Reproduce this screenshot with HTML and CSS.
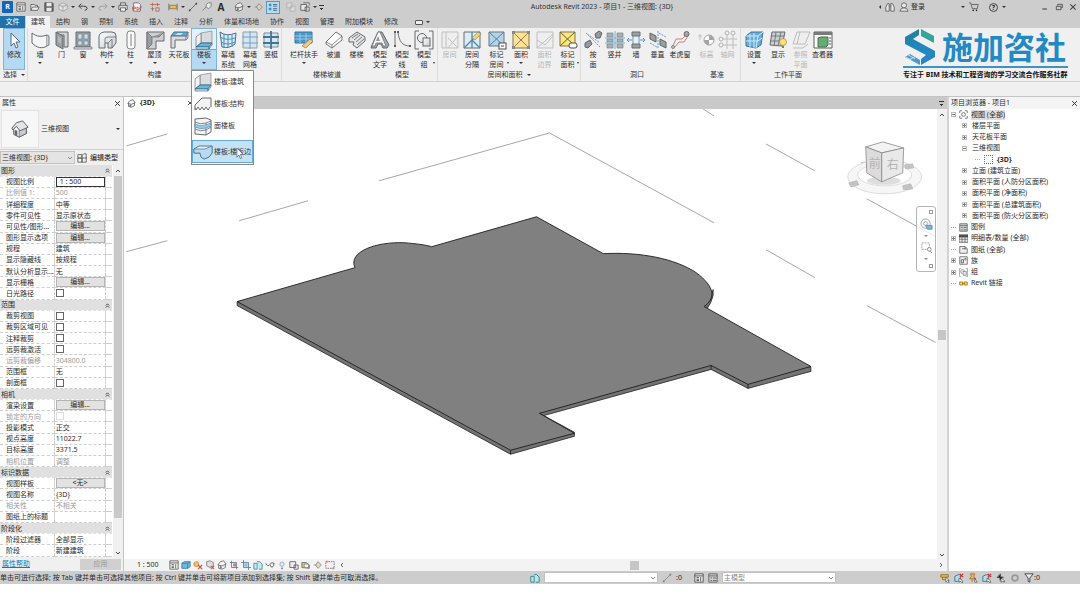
FILE: index.html
```html
<!DOCTYPE html>
<html lang="zh-CN">
<head>
<meta charset="utf-8">
<title>Autodesk Revit 2023 - 项目1</title>
<link rel="stylesheet" href="styles.css">
</head>
<body>
<svg class="defs" aria-hidden="true">
  <defs>
    <linearGradient id="brandFill" x1="0" y1="0" x2="0" y2="1"><stop offset="0" stop-color="#237f96"/><stop offset=".5" stop-color="#1f88bd"/><stop offset="1" stop-color="#2e83c6"/></linearGradient>
    <linearGradient id="steel" x1="0" y1="0" x2="1" y2="1"><stop offset="0" stop-color="#fff"/><stop offset="1" stop-color="#c4c8cc"/></linearGradient>
  </defs>
  <!-- ribbon icons -->
  <symbol id="i-cursor" viewBox="0 0 20 20"><path d="M7 3v13l3-3 2 5 2-1-2-5h4z" fill="#fff" stroke="#4d5b66"/></symbol>
  <symbol id="i-wall" viewBox="0 0 20 20"><path d="M2 3c5 4 9 4 15 2v11c-5 3-10 2-15-3z" fill="#f6f7f7" stroke="#4e5256"/><path d="M17 5l2 1v9l-2 1" fill="#c4c8cc" stroke="#4e5256" stroke-width=".8"/></symbol>
  <symbol id="i-door" viewBox="0 0 20 20"><path d="M5 2h11v15h-4V5H5z" fill="#cfd2d5" stroke="#4e5256"/><path d="M4 2l7 4v13l-7-4z" fill="#8b9094" stroke="#4e5256"/><path d="M6 6l3 2v6l-3-2z" fill="#a9adb1"/></symbol>
  <symbol id="i-window" viewBox="0 0 20 20"><path d="M3 2h14v15H3z" fill="#8e979e" stroke="#4e5256"/><path d="M5 4h4v5H5zM11 4h4v5h-4zM5 11h4v4H5zM11 11h4v4h-4z" fill="#c3dcef" stroke="#5d6870" stroke-width=".6"/><path d="M1 17h18v2H1z" fill="#dfe1e3" stroke="#4e5256" stroke-width=".7"/></symbol>
  <symbol id="i-comp" viewBox="0 0 20 20"><path d="M2 18V7q0-4 5-5h8q4 0 4 4v7l-4 5h-4v-5H8v5z" fill="url(#steel)" stroke="#4e5256"/><path d="M8 13V9q0-2 3-2h8M11 13l4-4v9" fill="none" stroke="#4e5256" stroke-width=".8"/></symbol>
  <symbol id="i-column" viewBox="0 0 20 20"><rect x="6" y="1" width="8" height="18" rx="3" fill="#fafafa" stroke="#6d7175"/><path d="M10 4v12" stroke="#6d7175"/></symbol>
  <symbol id="i-roof" viewBox="0 0 20 20"><path d="M2 2h17v9h-8v8H2z" fill="#c9cccf" stroke="#4e5256"/><path d="M2 2l5 5v7l-5 5zM7 7h7l5-5" fill="#8a8f93" stroke="#4e5256" stroke-width=".7"/></symbol>
  <symbol id="i-ceiling" viewBox="0 0 20 20"><path d="M2 6l3-4h14l-2 5z" fill="#3aa0dc" stroke="#33607f"/><path d="M2 6h15v4H6v8H2z" fill="#d7dadd" stroke="#555"/><path d="M6 5l3-2 5 0-2 2z" fill="#bfe2f5"/><path d="M17 7l2-5v6l-2 2" fill="#b0b5b9" stroke="#555" stroke-width=".7"/></symbol>
  <symbol id="i-floor" viewBox="0 0 20 20"><path d="M7 3l11-2v12H7z" fill="#d5d8da" stroke="#7d8286" stroke-width=".8"/><path d="M7 3L2 7v10l5-4z" fill="#f2f2f2" stroke="#6b7074" stroke-width=".8"/><path d="M2 17l5-4h11l-3 4z" fill="#46b0e3" stroke="#26556f"/><path d="M2 17h13v2H2zM15 17l3-4v2l-3 4z" fill="#d4eaf6" stroke="#26556f" stroke-width=".7"/></symbol>
  <symbol id="i-floorst" viewBox="0 0 20 20"><path d="M2 16v-5l7-7h9v9M2 14l1 2 2-3 2 3 2-3 2 3 2-3 2 3 2-3" fill="#f1f1f1" stroke="#505458"/></symbol>
  <symbol id="i-floorface" viewBox="0 0 20 20"><path d="M2 3l11-1 5 2v12l-5 3-11-1z" fill="#f1f2f3" stroke="#4e5256"/><path d="M2 6q5 3 11 1l5-2M2 13q5 3 11 1l5-3M13 7v12" fill="none" stroke="#4e5256" stroke-width=".8"/><path d="M2 8q5 3 11 1l5-2v3l-5 2q-6 2-11-1z" fill="#7cc5eb" stroke="#2c6a91" stroke-width=".6"/></symbol>
  <symbol id="i-flooredge" viewBox="0 0 20 20"><path d="M1 7l5-3h13v7l-3 4-5 2-3-2-1-4H1z" fill="#f2f7fb" stroke="#3e6684"/><path d="M1 7h11l7-3v7l-3 4-5 2-3-2-1-4H1z" fill="#b5d9ee" stroke="#3e6684" stroke-width=".8"/></symbol>
  <symbol id="i-curtain" viewBox="0 0 20 20"><path d="M2 2q6 5 16 1l-1 11q-6 5-13 3z" fill="#d6ecf8" stroke="#2f5a78"/><path d="M6 4v13M10 5v13M14 5v12M2 7q6 4 15 1M3 12q7 4 14 0" fill="none" stroke="#2d7cb0"/></symbol>
  <symbol id="i-grid" viewBox="0 0 20 20"><path d="M3 2h14v16H3z" fill="#d3e4ee" stroke="#858d93"/><path d="M10 1v18M2 7h16M2 13h16" stroke="#4e97c7"/></symbol>
  <symbol id="i-mullion" viewBox="0 0 20 20"><path d="M3 3h14v14H3z" fill="#cfe5f2" stroke="#6b7880"/><path d="M10 1v18M2 7h16M2 13h16" stroke="#245f8b" stroke-width="1.800"/></symbol>
  <symbol id="i-rail" viewBox="0 0 20 20"><path d="M1 2h17v11H1z" fill="#2f88c4" stroke="#1f5f8f"/><path d="M1 6h17M1 9h17M6 3v10M12 3v10" stroke="#9fd2f0" stroke-width=".8"/><path d="M8 16l8-7 3 2-7 7z" fill="#f0c277" stroke="#8f6424" stroke-width=".7"/></symbol>
  <symbol id="i-ramp" viewBox="0 0 20 20"><path d="M2 12L12 2l6 4v4L8 18l-6-4z" fill="#fdfdfd" stroke="#5d6165"/><path d="M2 12l6 3L18 6M8 15v3" fill="none" stroke="#5d6165" stroke-width=".8"/></symbol>
  <symbol id="i-stair" viewBox="0 0 20 20"><path d="M2 8l8-6 8 5v4l-8 7-4-3 1-3-5 0z" fill="#e3e5e7" stroke="#4e5256"/><path d="M5 8l6-4M7 10l6-5M9 12l6-5M10 15l7-6" stroke="#5f6468"/></symbol>
  <symbol id="i-text3d" viewBox="0 0 20 20"><path d="M8 2h4l7 13-2 3h-4l-2-4H8l-2 4H1l1-3z" fill="#9a9fa3" stroke="#4b4f53"/><path d="M8 2h2l6 14h-3l-1-3H6l-1 3H2z" fill="#f8f8f8" stroke="#4b4f53" stroke-width=".7"/><path d="M8 6l2 5H6z" fill="#888"/></symbol>
  <symbol id="i-mline" viewBox="0 0 20 20"><path d="M3 2v13M6 2c1 9 4 14 12 14" fill="none" stroke="#5a5e62"/><path d="M2 1h2v2H2zM2 15h2v2H2zM5 1h2v2H5zM17 15h2v2h-2z" fill="#444"/></symbol>
  <symbol id="i-group" viewBox="0 0 20 20"><path d="M5 1H1v18h4M15 1h4v18h-4" fill="none" stroke="#4e5256"/><circle cx="8" cy="8" r="4.500" fill="#eee" stroke="#4e5256"/><rect x="9" y="8" width="7" height="8" fill="url(#steel)" stroke="#4e5256"/></symbol>
  <symbol id="i-room" viewBox="0 0 20 20"><path d="M2 2h16v16H2zM6 2v16M8 8l10 10M18 6L8 18" fill="#eee" stroke="#b9b9b9"/></symbol>
  <symbol id="i-roomsep" viewBox="0 0 20 20"><path d="M2 2h16v16H2z" fill="#d8ecf8" stroke="#52565a"/><path d="M10 2v16M2 18L18 2M10 10l8 8" stroke="#3474a1" stroke-width="1.300"/><path d="M10 8l6-6 3 2-6 6z" fill="#f2cf5b" stroke="#806a2a" stroke-width=".6"/></symbol>
  <symbol id="i-tagroom" viewBox="0 0 20 20"><path d="M2 2h15v14H2z" fill="#a9cfe8" stroke="#52616c"/><path d="M2 2l15 14M17 2L2 16" stroke="#346f98"/><rect x="12" y="13" width="7" height="6" fill="#fff" stroke="#333"/><path d="M14 16h3" stroke="#333"/></symbol>
  <symbol id="i-area" viewBox="0 0 20 20"><path d="M2 2h16v16H2z" fill="#ffe08a" stroke="#72602b"/><path d="M2 2l16 16M18 2L2 18" stroke="#8a6a20"/><path d="M1 1h3v3H1zM16 1h3v3h-3zM1 16h3v3H1zM16 16h3v3h-3z" fill="#777"/></symbol>
  <symbol id="i-areab" viewBox="0 0 20 20"><path d="M2 2h16v16H2zM2 10l8 5 8-9M2 18l16-14" fill="#eee" stroke="#b9b9b9"/></symbol>
  <symbol id="i-tagarea" viewBox="0 0 20 20"><path d="M2 2h15v14H2z" fill="#ffe36b" stroke="#72602b"/><path d="M2 2l15 14M17 2L2 16" stroke="#4e4720"/><rect x="11" y="13" width="8" height="5" rx="2" fill="#fff" stroke="#333"/></symbol>
  <symbol id="i-byface" viewBox="0 0 20 20"><path d="M2 13l5-3 2 4-4 4-3-1zM12 4l4-3 3 2-2 5-4 0z" fill="#858b90" stroke="#474c50"/><path d="M3 3l14 14M16 12l-12-8" stroke="#4a94c4" stroke-dasharray="2 1"/></symbol>
  <symbol id="i-shaft" viewBox="0 0 20 20"><path d="M2 3h6v4H2zM12 3h6v4h-6zM2 9h6v3H2zM12 9h6v3h-6zM2 14h6v4H2zM12 14h6v4h-6z" fill="#a0a5aa" stroke="#6a7075" stroke-width=".7"/><path d="M10 1v18M0 8h20M0 13h20" stroke="#58a4d0"/></symbol>
  <symbol id="i-wallop" viewBox="0 0 20 20"><path d="M6 2h8v4H6zM6 14h8v4H6z" fill="#8b9197" stroke="#50565b"/><path d="M7 6v8M13 6v8M1 10h5M14 10h5M3 8l-2 2 2 2M17 8l2 2-2 2" fill="none" stroke="#3b8fc2"/></symbol>
  <symbol id="i-vert" viewBox="0 0 20 20"><path d="M2 3l6 3v6l-6-3zM12 9l6 3v6l-6-3z" fill="#8b9197" stroke="#474c50"/><path d="M10 1v18M2 13l7 4M11 3l7 4" stroke="#4a94c4" stroke-dasharray="2 1"/></symbol>
  <symbol id="i-dormer" viewBox="0 0 20 20"><path d="M2 18l4-9 6 0 6-6M4 18l5-6 5 0 4-6" fill="none" stroke="#c8716e"/><circle cx="16.500" cy="4" r="2.500" fill="#999" stroke="#555"/><circle cx="3" cy="17" r="1.500" fill="#bbb" stroke="#777"/></symbol>
  <symbol id="i-level" viewBox="0 0 20 20"><path d="M1 6h4M3 4v6" stroke="#bbb"/><circle cx="12" cy="10" r="5" fill="#fff" stroke="#999"/><path d="M12 10V5a5 5 0 0 1 5 5zM12 10v5a5 5 0 0 1-5-5z" fill="#999"/></symbol>
  <symbol id="i-axis" viewBox="0 0 20 20"><path d="M9 5v14M15 5v14M5 9h14M5 15h14" stroke="#b5b5b5"/><g fill="#f3f3f3" stroke="#aaa"><circle cx="9" cy="3" r="2"/><circle cx="15" cy="3" r="2"/><circle cx="3" cy="9" r="2"/><circle cx="3" cy="15" r="2"/></g></symbol>
  <symbol id="i-wpset" viewBox="0 0 20 20"><path d="M2 6l5-4h12l-2 13-5 3-10-2z" fill="#4da3d8" stroke="#235f8b"/><path d="M2 6h12l5-4M14 6l-2 12M6 4v13M10 3v15M2 11h12l4-3" fill="none" stroke="#cdeaf9"/></symbol>
  <symbol id="i-wpshow" viewBox="0 0 20 20"><path d="M4 2h13l-3 14-12-1z" fill="#c4cacf" stroke="#4e5256"/><path d="M8 2L6 16M13 2l-3 14M3 6h13M3 11h12" stroke="#4e5256" stroke-width=".8"/><circle cx="15" cy="12" r="3.500" fill="#ffdf63" stroke="#9c7a18" stroke-width=".7"/><path d="M14 16h2v2h-2z" fill="#666"/></symbol>
  <symbol id="i-refp" viewBox="0 0 20 20"><path d="M6 2h13l-5 12H2zM2 18h10l5-4M9 2l-3 12" fill="#eee" stroke="#b5b5b5"/></symbol>
  <symbol id="i-viewer" viewBox="0 0 20 20"><path d="M1 2h18v16H1z" fill="#fff" stroke="#444"/><path d="M1 2h18v3H1z" fill="#666"/><path d="M5 8l3-1h7v8l-2 2H5z" fill="#4fa05a" stroke="#2b6134"/><path d="M17 7v9" stroke="#444" stroke-dasharray="2 1"/></symbol>
  <!-- small icons -->
  <symbol id="s-win" viewBox="0 0 12 12"><path d="M1 1h10v10H1zM1 3.500h10" fill="#eee" stroke="#444"/><path d="M3 5.500h3M3 7.500h3M3 9h3M8 5v5" stroke="#444"/></symbol>
  <symbol id="s-open" viewBox="0 0 12 12"><path d="M1 10V3h4l1 1h3v2M1 10l2-4h8l-2 4z" fill="#f5f5f5" stroke="#444"/></symbol>
  <symbol id="s-save" viewBox="0 0 12 12"><path d="M1 1h9l1 1v9H1z" fill="#555a5e" stroke="#333"/><path d="M3 1h6v4H3zM3 7h6v4H3z" fill="#eee"/></symbol>
  <symbol id="s-cube" viewBox="0 0 12 12"><path d="M6 1l5 2.500v5L6 11 1 8.500v-5zM1 3.500L6 6l5-2.500M6 6v5" fill="#e8e8e8" stroke="currentColor"/></symbol>
  <symbol id="s-undo" viewBox="0 0 12 12"><path d="M4 2L1 5l3 3M1 5h6q4 0 4 3-1 2-3 2" fill="none" stroke="currentColor" stroke-width="1.200"/></symbol>
  <symbol id="s-redo" viewBox="0 0 12 12"><path d="M8 2l3 3-3 3M11 5H5Q1 5 1 8q1 2 3 2" fill="none" stroke="currentColor" stroke-width="1.200"/></symbol>
  <symbol id="s-print" viewBox="0 0 12 12"><path d="M3 4V1h6v3M1 4h10v5H1z" fill="#ddd" stroke="#444"/><path d="M3 7h6v4H3z" fill="#fff" stroke="#444"/></symbol>
  <symbol id="s-pdf" viewBox="0 0 12 12"><path d="M2 1h6l2 2v8H2z" fill="#fff" stroke="#555"/><path d="M1 10V6h3v2H1M6 10V6l3 2-3 2M10 10V6h2" fill="none" stroke="#c8392f"/></symbol>
  <symbol id="s-measure" viewBox="0 0 12 12"><path d="M0 3h12M3 1v4M9 1v4" stroke="#b84e43"/><path d="M3 6v5M1 8h4M7 7h4v4H7z" fill="none" stroke="#a35a50"/></symbol>
  <symbol id="s-ruler" viewBox="0 0 12 12"><path d="M1 2v8M11 2v8" stroke="#555"/><path d="M2 4h8v4H2z" fill="#e5bf52" stroke="#8a6a20"/></symbol>
  <symbol id="s-line" viewBox="0 0 12 12"><path d="M2 10l8-8" stroke="#444"/><path d="M1 9h2v2H1zM9 1h2v2H9z" fill="#333"/></symbol>
  <symbol id="s-tag" viewBox="0 0 12 12"><path d="M1 10l4-4" stroke="#666"/><path d="M5 6V3l3-2h3v4L8 8z" fill="#eee" stroke="#666"/></symbol>
  <symbol id="s-house" viewBox="0 0 12 12"><path d="M2 6v4l4 1 4-2V5M1 6l3-4 4-1 3 4-5 2z" fill="#f6f6f6" stroke="#4e5256"/><path d="M4 10V8h1v2" stroke="#333" fill="none"/></symbol>
  <symbol id="i-house" viewBox="0 0 20 20"><path d="M3 9v7l6 3 8-4V8l-7-4z" fill="#fafafa" stroke="#54595d"/><path d="M9 19v-8l8-3v7z" fill="#c9ccce" stroke="#54595d" stroke-width=".8"/><path d="M1 9l5-6 7-2 6 7-9 4-4-5-4 4z" fill="#e2e4e6" stroke="#54595d"/><path d="M4 16v-5l3 1v6z" fill="#5f6468"/></symbol>
  <symbol id="s-section" viewBox="0 0 12 12"><path d="M1 6h3M6 2l4 4-4 4-3-4z" fill="#e7d0b4" stroke="#777"/></symbol>
  <symbol id="s-list" viewBox="0 0 12 12"><path d="M1 2h3v3H1zM1 7h3v3H1z" fill="#2d7fb9"/><path d="M6 3h5M6 5h5M6 8h5M6 10h5" stroke="#2b4c64"/></symbol>
  <symbol id="s-closewin" viewBox="0 0 12 12"><path d="M1 1h6v6H1zM5 5h6v6H5z" fill="#ddd" stroke="#aaa"/></symbol>
  <symbol id="s-switch" viewBox="0 0 12 12"><path d="M1 3h7v7H1zM4 1h7v3M6 6h5v5H6z" fill="#eee" stroke="#444"/></symbol>
  <symbol id="s-bino" viewBox="0 0 12 12"><path d="M1 11V6l2-4h2v9zM11 11V6L9 2H7v9zM5 5h2" fill="#eee" stroke="#444"/></symbol>
  <symbol id="s-user" viewBox="0 0 12 12"><circle cx="6" cy="4" r="3" fill="#eee" stroke="#444"/><path d="M1 11q1-4 5-4t5 4z" fill="#eee" stroke="#444"/></symbol>
  <symbol id="s-cart" viewBox="0 0 12 12"><path d="M0 1h2l2 7h6l1-5H3" fill="none" stroke="#444"/><circle cx="5" cy="10" r="1"/><circle cx="9" cy="10" r="1"/></symbol>
  <symbol id="s-restore" viewBox="0 0 12 12"><path d="M4 4V2h7v5H9M2 5h7v5H2z" fill="none" stroke="#333" stroke-width="1.300"/></symbol>
  <symbol id="s-close" viewBox="0 0 12 12"><path d="M2 2l8 8M10 2l-8 8" stroke="#333" stroke-width="1.700"/></symbol>
  <symbol id="s-min" viewBox="0 0 12 12"><path d="M2 9h7" stroke="#333" stroke-width="1.700"/></symbol>
  <symbol id="s-up" viewBox="0 0 12 12"><path d="M2 8l4-4 4 4" fill="none" stroke="#444" stroke-width="2"/></symbol>
  <symbol id="s-down" viewBox="0 0 12 12"><path d="M2 4l4 4 4-4" fill="none" stroke="currentColor" stroke-width="2"/></symbol>
  <symbol id="s-right" viewBox="0 0 12 12"><path d="M4 2l4 4-4 4" fill="none" stroke="#444" stroke-width="2"/></symbol>
  <symbol id="s-left" viewBox="0 0 12 12"><path d="M8 2L4 6l4 4" fill="none" stroke="#444" stroke-width="2"/></symbol>
  <symbol id="s-collapse" viewBox="0 0 12 12"><path d="M2 6l4-4 4 4M2 11l4-4 4 4" fill="none" stroke="#333" stroke-width="2"/></symbol>
  <symbol id="s-edit" viewBox="0 0 12 12"><path d="M1 2h5v4H1zM1 6h5v5H1zM6 3l2-2h3v10H6z" fill="#f4f4f4" stroke="#555"/><path d="M7 6h5" stroke="#555"/></symbol>
  <symbol id="s-box" viewBox="0 0 12 12"><path d="M1 4l3-2h7v6l-3 2H1zM1 4h7v6M8 4l3-2" fill="#58b0e4" stroke="#23658f"/></symbol>
  <symbol id="s-sunx" viewBox="0 0 12 12"><circle cx="4" cy="5" r="3" fill="#f0bb50" stroke="#96671d" stroke-width=".7"/><path d="M6 6l5 5M11 6l-5 5" stroke="#c33" stroke-width="1.500"/></symbol>
  <symbol id="s-shade" viewBox="0 0 12 12"><path d="M2 2l4-1 4 2v4L6 9 2 7z" fill="#ddd" stroke="#666"/><path d="M7 7l4 4M11 7l-4 4" stroke="#c33" stroke-width="1.300"/></symbol>
  <symbol id="s-crop" viewBox="0 0 12 12"><path d="M3 0v9h9M0 3h9v9" fill="none" stroke="#41687f"/><path d="M4 4h4v4H4z" fill="#73b5dd"/></symbol>
  <symbol id="s-cropx" viewBox="0 0 12 12"><path d="M3 1v8h8M1 3h8v8" fill="none" stroke="#41687f"/><path d="M5 4h4v4H5z" fill="#d26a5c"/></symbol>
  <symbol id="s-glass" viewBox="0 0 12 12"><path d="M1 4q2 5 5 1 2-3 5-1-1 6-4 4L6 6" fill="none" stroke="#333"/></symbol>
  <symbol id="s-bulb" viewBox="0 0 12 12"><circle cx="6" cy="5" r="2.500" fill="#e9f1f6" stroke="#7290a3"/><path d="M5 9h2v2H5z" fill="#667"/></symbol>
  <symbol id="s-lock" viewBox="0 0 12 12"><path d="M1 2h7v7H1zM6 6h5v5H6z" fill="#eee" stroke="#444"/></symbol>
  <symbol id="s-lens" viewBox="0 0 12 12"><path d="M1 9V3h5l4 3v4z" fill="#d8b36d" stroke="#555"/><path d="M4 5h5v4H4z" fill="#fff" stroke="#555" stroke-width=".7"/></symbol>
  <symbol id="s-dash" viewBox="0 0 12 12"><path d="M1 2h10v8H1z" fill="none" stroke="#555" stroke-dasharray="2 1"/><path d="M1 1h2v2H1zM9 9h2v2H9z" fill="#c66"/></symbol>
  <symbol id="s-team" viewBox="0 0 12 12"><path d="M1 4h4v7H1zM5 2h3l3 3v6H7" fill="#bfe6ea" stroke="#1e7d8b"/></symbol>
  <symbol id="s-link" viewBox="0 0 12 12"><path d="M1 4h4v4H1zM7 4h4v4H7z" fill="#ffe18a" stroke="#a8801b" stroke-width="1.300"/><path d="M4 6h4" stroke="#a8801b" stroke-width="1.500"/></symbol>
  <symbol id="s-select" viewBox="0 0 12 12"><path d="M1 2h9v3H1zM3 5v3h4" fill="#e7be48" stroke="#8d6d1f"/><path d="M7 5v6l1-1 2 2 1-1-2-2h2z" fill="#fff" stroke="#333" stroke-width=".7"/></symbol>
  <symbol id="s-selred" viewBox="0 0 12 12"><path d="M1 4l4-2h3v7l-4 1H1z" fill="#b8dced" stroke="#356b8b"/><path d="M7 1l4 4M11 1L7 5" stroke="#c33" stroke-width="1.400"/><path d="M6 6v5l2-1 2 2V9z" fill="#fff" stroke="#333" stroke-width=".7"/></symbol>
  <symbol id="s-pin" viewBox="0 0 12 12"><path d="M3 1h5l-1 3 2 3H2l2-3zM5 7v4" fill="#f0b45e" stroke="#b06a24"/><path d="M8 6v5l3 0z" fill="#fff" stroke="#333" stroke-width=".7"/></symbol>
  <symbol id="s-move" viewBox="0 0 12 12"><path d="M5 1v8M1 5h8M3 3l4 4" stroke="#222" stroke-width="1.300"/><path d="M6 6v5l2-1 2 1V9z" fill="#fff" stroke="#333" stroke-width=".8"/></symbol>
  <symbol id="s-gear" viewBox="0 0 12 12"><circle cx="6" cy="6" r="3.500" fill="none" stroke="#999" stroke-width="2"/></symbol>
  <symbol id="s-funnel" viewBox="0 0 12 12"><path d="M1 1h10L7 6v5l-2-1V6z" fill="#eee" stroke="#333"/></symbol>
  <symbol id="t-views" viewBox="0 0 12 12"><path d="M1 4V1h3M8 1h3v3M11 8v3H8M4 11H1V8" fill="none" stroke="#555"/><circle cx="6" cy="6" r="2.500" fill="none" stroke="#555"/></symbol>
  <symbol id="t-legend" viewBox="0 0 12 12"><path d="M1 1h10v10H1z" fill="#d2d5d7" stroke="#555"/><path d="M1 3.500h10M3 6h2M6 6h4M3 9h2M6 9h4" stroke="#555"/></symbol>
  <symbol id="t-table" viewBox="0 0 12 12"><path d="M0 1h12v10H0z" fill="#e9ebec" stroke="#444"/><path d="M0 3h12" stroke="#444" stroke-width="3"/><path d="M0 7h12M4 3v8M8 3v8" stroke="#666"/></symbol>
  <symbol id="t-sheet" viewBox="0 0 12 12"><path d="M1 2h7l3 3v6H1zM4 5h6M8 2v4" fill="#eee" stroke="#555"/></symbol>
  <symbol id="t-family" viewBox="0 0 12 12"><path d="M1 1h10v10H1z" fill="#f4f4f4" stroke="#555"/><path d="M3 9V5h3v4zM6 5l3-2v3" fill="none" stroke="#444"/></symbol>
</svg>

<div class="app">
  <header class="titlebar">
    <div class="quick">
      <button class="logo" aria-label="Revit">R</button>
      <button><svg><use href="#s-win"/></svg></button>
      <button><svg><use href="#s-open"/></svg></button>
      <button><svg><use href="#s-save"/></svg></button>
      <button class="dim"><svg><use href="#s-cube"/></svg></button>
      <i class="caret"></i>
      <button><svg><use href="#s-undo"/></svg></button>
      <i class="caret"></i>
      <button class="dim"><svg><use href="#s-redo"/></svg></button>
      <i class="caret"></i>
      <button><svg><use href="#s-print"/></svg></button>
      <button class="spaced"><svg><use href="#s-pdf"/></svg></button>
      <button class="spaced"><svg><use href="#s-measure"/></svg></button>
      <button><svg><use href="#s-ruler"/></svg></button>
      <i class="caret"></i>
      <button><svg><use href="#s-line"/></svg></button>
      <button><svg><use href="#s-tag"/></svg></button>
      <button class="letter spaced">A</button>
      <button><svg><use href="#s-house"/></svg></button>
      <i class="caret"></i>
      <button><svg><use href="#s-section"/></svg></button>
      <button class="lit spaced"><svg><use href="#s-list"/></svg></button>
      <button><svg><use href="#s-closewin"/></svg></button>
      <button><svg><use href="#s-switch"/></svg></button>
      <i class="caret"></i>
      <i class="caret barred"></i>
    </div>
    <div class="caption">Autodesk Revit 2023 - 项目1 - 三维视图: {3D}</div>
    <div class="account">
      <i class="caret side"></i>
      <button><svg><use href="#s-bino"/></svg></button>
      <button class="login"><svg><use href="#s-user"/></svg>登录</button>
      <i class="caret"></i>
      <button><svg><use href="#s-cart"/></svg></button>
      <button class="help">?</button>
      <i class="caret"></i>
    </div>
    <div class="winctl">
      <button aria-label="最小化"><svg><use href="#s-min"/></svg></button>
      <button aria-label="还原"><svg><use href="#s-restore"/></svg></button>
      <button aria-label="关闭"><svg><use href="#s-close"/></svg></button>
    </div>
  </header>

  <nav class="tabs">
    <button class="file">文件</button><button class="on">建筑</button><button>结构</button><button>钢</button><button>预制</button><button>系统</button><button>插入</button><button>注释</button><button>分析</button><button>体量和场地</button><button>协作</button><button>视图</button><button>管理</button><button>附加模块</button><button>修改</button><button class="more"><i></i><i class="caret"></i></button>
  </nav>

  <section class="ribbon">
    <div class="panel p-select"><div class="tools"><button class="tool picked"><svg><use href="#i-cursor"/></svg><span>修改</span></button></div><h2>选择 <i class="caret"></i></h2></div>
    <div class="panel p-build"><div class="tools">
      <button class="tool drop"><svg><use href="#i-wall"/></svg><span>墙</span></button>
      <button class="tool"><svg><use href="#i-door"/></svg><span>门</span></button>
      <button class="tool"><svg><use href="#i-window"/></svg><span>窗</span></button>
      <button class="tool drop"><svg><use href="#i-comp"/></svg><span>构件</span></button>
      <button class="tool drop"><svg><use href="#i-column"/></svg><span>柱</span></button>
      <button class="tool drop"><svg><use href="#i-roof"/></svg><span>屋顶</span></button>
      <button class="tool"><svg><use href="#i-ceiling"/></svg><span>天花板</span></button>
      <div class="split">
        <button class="tool drop open"><svg><use href="#i-floor"/></svg><span>楼板</span></button>
        <div class="menu">
          <button><svg><use href="#i-floor"/></svg>楼板:建筑</button>
          <button><svg><use href="#i-floorst"/></svg>楼板:结构</button>
          <button><svg><use href="#i-floorface"/></svg>面楼板</button>
          <button class="hover"><svg><use href="#i-flooredge"/></svg>楼板:楼板边</button>
          <svg class="pointer"><use href="#i-cursor"/></svg>
        </div>
      </div>
      <button class="tool"><svg><use href="#i-curtain"/></svg><span>幕墙<br>系统</span></button>
      <button class="tool"><svg><use href="#i-grid"/></svg><span>幕墙<br>网格</span></button>
      <button class="tool"><svg><use href="#i-mullion"/></svg><span>竖梃</span></button>
    </div><h2>构建</h2></div>
    <div class="panel p-stairs"><div class="tools">
      <button class="tool drop"><svg><use href="#i-rail"/></svg><span>栏杆扶手</span></button>
      <button class="tool"><svg><use href="#i-ramp"/></svg><span>坡道</span></button>
      <button class="tool"><svg><use href="#i-stair"/></svg><span>楼梯</span></button>
    </div><h2>楼梯坡道</h2></div>
    <div class="panel p-model"><div class="tools">
      <button class="tool"><svg><use href="#i-text3d"/></svg><span>模型<br>文字</span></button>
      <button class="tool"><svg><use href="#i-mline"/></svg><span>模型<br>线</span></button>
      <button class="tool dropside"><svg><use href="#i-group"/></svg><span>模型<br>组</span></button>
    </div><h2>模型</h2></div>
    <div class="panel p-room"><div class="tools">
      <button class="tool off" disabled><svg><use href="#i-room"/></svg><span>房间</span></button>
      <button class="tool"><svg><use href="#i-roomsep"/></svg><span>房间<br>分隔</span></button>
      <button class="tool dropside"><svg><use href="#i-tagroom"/></svg><span>标记<br>房间</span></button>
      <button class="tool drop"><svg><use href="#i-area"/></svg><span>面积</span></button>
      <button class="tool off" disabled><svg><use href="#i-areab"/></svg><span>面积<br>边界</span></button>
      <button class="tool dropside"><svg><use href="#i-tagarea"/></svg><span>标记<br>面积</span></button>
    </div><h2>房间和面积 <i class="caret"></i></h2></div>
    <div class="panel p-open"><div class="tools">
      <button class="tool"><svg><use href="#i-byface"/></svg><span>按<br>面</span></button>
      <button class="tool"><svg><use href="#i-shaft"/></svg><span>竖井</span></button>
      <button class="tool"><svg><use href="#i-wallop"/></svg><span>墙</span></button>
      <button class="tool"><svg><use href="#i-vert"/></svg><span>垂直</span></button>
      <button class="tool"><svg><use href="#i-dormer"/></svg><span>老虎窗</span></button>
    </div><h2>洞口</h2></div>
    <div class="panel p-datum"><div class="tools">
      <button class="tool off" disabled><svg><use href="#i-level"/></svg><span>标高</span></button>
      <button class="tool off" disabled><svg><use href="#i-axis"/></svg><span>轴网</span></button>
    </div><h2>基准</h2></div>
    <div class="panel p-plane"><div class="tools">
      <button class="tool drop"><svg><use href="#i-wpset"/></svg><span>设置</span></button>
      <button class="tool"><svg><use href="#i-wpshow"/></svg><span>显示</span></button>
      <button class="tool off" disabled><svg><use href="#i-refp"/></svg><span>参照<br>平面</span></button>
      <button class="tool"><svg><use href="#i-viewer"/></svg><span>查看器</span></button>
    </div><h2>工作平面</h2></div>
    <aside class="brand">
      <div class="mark">
        <svg viewBox="0 0 30 36"><path d="M0 8L14 0v6L8 10l22 12v6L16 36v-6l5-4L0 15z" fill="url(#brandFill)"/><path d="M16 0l13 7v7L16 7z" fill="#34a59a"/><path d="M0 28l5-3 10 6v5z" fill="#4b9bd0"/><path d="M2 25l8 5M4 31l7-4M1 28l5 3" stroke="#d9ecf6" stroke-width=".8"/></svg>
        <strong>施加咨社</strong>
      </div>
      <p>专注于 BIM 技术和工程咨询的学习交流合作服务社群</p>
    </aside>
  </section>
  <div class="options"></div>

  <main class="work">
    <section class="props">
      <div class="head"><span>属性</span><button aria-label="关闭"><svg><use href="#s-close"/></svg></button></div>
      <div class="type"><div class="thumb"><svg><use href="#i-house"/></svg></div><span>三维视图</span><i class="caret"></i></div>
      <div class="instance">
        <div class="pick"><select aria-label="类型"><option>三维视图: {3D}</option></select><svg><use href="#s-down"/></svg></div>
        <button><svg><use href="#s-edit"/></svg>编辑类型</button>
      </div>
      <div class="sheet">
        <table>
          <colgroup><col class="c-name"><col><col class="c-end"></colgroup>
          <tbody>
          <tr class="cat"><th colspan="3">图形<svg><use href="#s-collapse"/></svg></th></tr>
          <tr><th><label for="scale">视图比例</label></th><td><input id="scale" type="text" value="1 : 500"></td><td></td></tr>
          <tr class="ro"><th>比例值 1:</th><td>500</td><td></td></tr>
          <tr><th>详细程度</th><td>中等</td><td></td></tr>
          <tr><th>零件可见性</th><td>显示原状态</td><td></td></tr>
          <tr><th>可见性/图形...</th><td><button>编辑...</button></td><td></td></tr>
          <tr><th>图形显示选项</th><td><button>编辑...</button></td><td></td></tr>
          <tr><th>规程</th><td>建筑</td><td></td></tr>
          <tr><th>显示隐藏线</th><td>按规程</td><td></td></tr>
          <tr><th>默认分析显示...</th><td>无</td><td></td></tr>
          <tr><th>显示栅格</th><td><button>编辑...</button></td><td></td></tr>
          <tr><th><label for="sun">日光路径</label></th><td><input id="sun" type="checkbox"></td><td></td></tr>
          <tr class="cat"><th colspan="3">范围<svg><use href="#s-collapse"/></svg></th></tr>
          <tr><th><label for="c1">裁剪视图</label></th><td><input id="c1" type="checkbox"></td><td></td></tr>
          <tr><th><label for="c2">裁剪区域可见</label></th><td><input id="c2" type="checkbox"></td><td></td></tr>
          <tr><th><label for="c3">注释裁剪</label></th><td><input id="c3" type="checkbox"></td><td></td></tr>
          <tr><th><label for="c4">远剪裁激活</label></th><td><input id="c4" type="checkbox"></td><td></td></tr>
          <tr class="ro"><th>远剪裁偏移</th><td>304800.0</td><td></td></tr>
          <tr><th>范围框</th><td>无</td><td></td></tr>
          <tr><th><label for="c5">剖面框</label></th><td><input id="c5" type="checkbox"></td><td></td></tr>
          <tr class="cat"><th colspan="3">相机<svg><use href="#s-collapse"/></svg></th></tr>
          <tr><th>渲染设置</th><td><button>编辑...</button></td><td></td></tr>
          <tr class="ro"><th><label for="c6">锁定的方向</label></th><td><input id="c6" type="checkbox" disabled></td><td></td></tr>
          <tr><th>投影模式</th><td>正交</td><td></td></tr>
          <tr><th>视点高度</th><td>11022.7</td><td></td></tr>
          <tr><th>目标高度</th><td>3371.5</td><td></td></tr>
          <tr class="ro"><th>相机位置</th><td>调整</td><td></td></tr>
          <tr class="cat"><th colspan="3">标识数据<svg><use href="#s-collapse"/></svg></th></tr>
          <tr><th>视图样板</th><td><button>&lt;无&gt;</button></td><td></td></tr>
          <tr><th>视图名称</th><td>{3D}</td><td></td></tr>
          <tr class="ro"><th>相关性</th><td>不相关</td><td></td></tr>
          <tr><th>图纸上的标题</th><td></td><td></td></tr>
          <tr class="cat"><th colspan="3">阶段化<svg><use href="#s-collapse"/></svg></th></tr>
          <tr><th>阶段过滤器</th><td>全部显示</td><td></td></tr>
          <tr><th>阶段</th><td>新建建筑</td><td></td></tr>
          </tbody>
        </table>
        <div class="vbar"><svg><use href="#s-up"/></svg><i></i><svg><use href="#s-down"/></svg></div>
      </div>
      <div class="foot"><a href="#help">属性帮助</a><button disabled>应用</button></div>
    </section>

    <section class="view">
      <div class="doctabs"><div class="doctab"><svg><use href="#s-house"/></svg><b>{3D}</b><button aria-label="关闭"><svg><use href="#s-close"/></svg></button></div><i class="caret barred"></i></div>
      <div class="stage">
        <div class="canvas">
          <svg class="model" viewBox="124 109 812 451" preserveAspectRatio="xMidYMid meet">
            <g fill="none" stroke="#8f8f8f" stroke-width=".8">
              <path d="M125 146l41-12M125 252l41-11M238 221l69-20M378 181l171-48 165 90M703 109l11 7M766 144l49 27M766 250l49 28M867 199l69 38M867 306l69 37"/>
            </g>
            <path d="M236 302v4L510 455l64-18v-4l-35-19-2 4 174-48 37 19 63-17v-4L600 320zM704 307l6-6 3-11v6q-2 8-6 13z" fill="#747474" stroke="#222" stroke-width=".8"/>
            <path d="M236 302L354 268C347 252 375 242 403 243 415 244 424 245 431 247L536 217 603 254C640 252 675 259 696 273 716 288 715 299 704 307L811 367 748 385 711 366 539 414 574 434 510 451z" fill="#808080" stroke="#1d1d1d" stroke-width=".9"/>
            <path d="M510 451v4M748 385v4M711 366v4" stroke="#1d1d1d" stroke-width=".9"/>
            <g stroke="#b8b8b8" stroke-width=".8">
              <ellipse cx="885" cy="177" rx="37" ry="17" fill="#f6f6f6" stroke="#d4d4d4"/>
              <ellipse cx="885" cy="175" rx="27" ry="11" fill="#fff" stroke="#d4d4d4"/>
              <ellipse cx="884" cy="181" rx="17" ry="4" fill="#dedede" stroke="none"/>
              <path d="M866 147l17-5 21 6-22 5z" fill="#f3f3f3" stroke="#888"/>
              <path d="M866 147l16 6v29l-15-9z" fill="#dcdcdc" stroke="#888"/>
              <path d="M882 153l22-5-1 25-21 9z" fill="#e9e9e9" stroke="#888"/>
              <path d="M849 183l8-2 2 4-8 2zM903 186l8-2 2 5-9 1zM905 165l8-1 1 4-8 1zM861 163l4-1" fill="#c3c3c3"/>
            </g>
            <g class="faces"><text x="869" y="168">前</text><text x="887" y="169">右</text></g>
          </svg>
          <div class="navbar">
            <button aria-label="关闭" class="dot"></button>
            <button aria-label="导航"><svg viewBox="0 0 14 14"><circle cx="6" cy="6" r="5" fill="#f7f7f7" stroke="#9ba4aa"/><circle cx="6" cy="6" r="2" fill="#fff" stroke="#9ba4aa"/><path d="M6 8h7v4H8z" fill="#7fb2d4" stroke="#5c93b8"/></svg></button>
            <i class="caret"></i>
            <button aria-label="缩放"><svg viewBox="0 0 14 14"><path d="M2 2h8v7H2z" fill="#fff" stroke="#999" stroke-dasharray="2 1"/><circle cx="10" cy="9" r="2" fill="#fff" stroke="#888"/><path d="M11 11l2 2" stroke="#888"/></svg></button>
            <i class="caret"></i>
            <button aria-label="选项" class="dot"></button>
          </div>
        </div>
        <div class="vbar wide"><svg><use href="#s-up"/></svg><i></i><svg><use href="#s-down"/></svg></div>
      </div>
      <div class="viewctl">
        <button class="ratio">1 : 500</button>
        <button><svg><use href="#s-win"/></svg></button>
        <button><svg><use href="#s-box"/></svg></button>
        <button><svg><use href="#s-sunx"/></svg></button>
        <button><svg><use href="#s-shade"/></svg></button>
        <button><svg><use href="#s-house"/></svg></button>
        <button><svg><use href="#s-cropx"/></svg></button>
        <button><svg><use href="#s-crop"/></svg></button>
        <button><svg><use href="#s-team"/></svg></button>
        <button><svg><use href="#s-glass"/></svg></button>
        <button><svg><use href="#s-bulb"/></svg></button>
        <button><svg><use href="#s-lock"/></svg></button>
        <button><svg><use href="#s-lens"/></svg></button>
        <button><svg><use href="#s-section"/></svg></button>
        <button><svg><use href="#s-dash"/></svg></button>
        <button class="tiny"><svg><use href="#s-left"/></svg></button>
        <div class="hbar"><i></i></div>
        <button class="tiny"><svg><use href="#s-right"/></svg></button>
      </div>
    </section>

    <section class="browser">
      <div class="head"><span>项目浏览器 - 项目1</span><button aria-label="关闭"><svg><use href="#s-close"/></svg></button></div>
      <ul class="tree">
        <li><i class="exp minus"></i><svg><use href="#t-views"/></svg><span class="cur">视图 (全部)</span></li>
        <li class="l2"><i class="exp"></i><span>楼层平面</span></li>
        <li class="l2"><i class="exp"></i><span>天花板平面</span></li>
        <li class="l2"><i class="exp minus"></i><span>三维视图</span></li>
        <li class="l3"><i class="stub"></i><i class="leaf"></i><b>{3D}</b></li>
        <li class="l2"><i class="exp"></i><span>立面 (建筑立面)</span></li>
        <li class="l2"><i class="exp"></i><span>面积平面 (人防分区面积)</span></li>
        <li class="l2"><i class="exp"></i><span>面积平面 (净面积)</span></li>
        <li class="l2"><i class="exp"></i><span>面积平面 (总建筑面积)</span></li>
        <li class="l2"><i class="exp"></i><span>面积平面 (防火分区面积)</span></li>
        <li><i class="exp none"></i><svg><use href="#t-legend"/></svg><span>图例</span></li>
        <li><i class="exp"></i><svg><use href="#t-table"/></svg><span>明细表/数量 (全部)</span></li>
        <li><i class="exp none"></i><svg><use href="#t-sheet"/></svg><span>图纸 (全部)</span></li>
        <li><i class="exp"></i><svg><use href="#t-family"/></svg><span>族</span></li>
        <li><i class="exp"></i><svg><use href="#i-group"/></svg><span>组</span></li>
        <li><i class="exp none"></i><svg><use href="#s-link"/></svg><span>Revit 链接</span></li>
      </ul>
    </section>
  </main>

  <footer class="status">
    <div class="hint">单击可进行选择; 按 Tab 键并单击可选择其他项目; 按 Ctrl 键并单击可将新项目添加到选择集; 按 Shift 键并单击可取消选择。</div>
    <div class="sets">
      <svg><use href="#s-team"/></svg>
      <div class="pick"><select aria-label="工作集"><option></option></select><svg><use href="#s-down"/></svg></div>
      <svg class="faint"><use href="#s-line"/></svg><span>:0</span>
      <svg class="apart"><use href="#s-win"/></svg><svg><use href="#t-legend"/></svg>
      <div class="pick"><select aria-label="设计选项"><option>主模型</option></select><svg><use href="#s-down"/></svg></div>
    </div>
    <div class="selects">
      <button><svg><use href="#s-select"/></svg></button>
      <button><svg><use href="#s-selred"/></svg></button>
      <button><svg><use href="#s-pin"/></svg></button>
      <button><svg><use href="#s-selred"/></svg></button>
      <button><svg><use href="#s-move"/></svg></button>
      <button><svg><use href="#s-gear"/></svg></button>
      <button><svg><use href="#s-funnel"/></svg>:0</button>
    </div>
  </footer>
</div>
</body>
</html>
```
FILE: styles.css
```css
* { box-sizing: border-box; }
body {
  margin: 0;
  background: #fff;
  color: #2b2b2b;
  font: 7px/10px "Noto Sans", "Noto Sans CJK SC", sans-serif;
}
button, input, select { font: inherit; color: inherit; margin: 0; padding: 0; border: 0; background: none; border-radius: 0; }
button { white-space: nowrap; }
svg { display: block; flex: none; }
h2, p, ul { margin: 0; padding: 0; font-weight: 400; font-size: 7px; }
.defs { position: absolute; width: 0; height: 0; }

.app { display: flex; flex-direction: column; height: calc(100vh - 24px); }

.caret { flex: none; width: 0; height: 0; border: 2px solid transparent; border-top-color: #333; border-bottom-width: 0; }
.caret.side { border: 2px solid transparent; border-right-color: #333; border-left-width: 0; }
.caret.barred { width: 5px; height: 5px; border: 0; border-top: 1px solid #333; background: linear-gradient(#333, #333) center 2px / 3px 1px no-repeat, linear-gradient(#333, #333) center 3px / 1px 1px no-repeat; }

/* title bar */
.titlebar { display: flex; align-items: center; height: 14px; background: #cdcdcd; }
.titlebar svg { opacity: .85; }
.quick { display: flex; align-items: center; }
.quick button, .winctl button { display: flex; justify-content: center; align-items: center; width: 14px; height: 13px; }
.quick svg { width: 10px; height: 10px; }
.quick .caret { margin: 0 1px; }
.quick .spaced { margin-right: 4px; }
.quick .logo { background: #1264bd; color: #fff; font-weight: 700; width: 11px; height: 12px; margin: 0 1px 0 2px; border-radius: 1px; }
.quick .dim { color: #999; }
.quick .letter { font: 700 10px/13px "Noto Sans", sans-serif; }
.quick .lit { background: #b8dcf5; outline: 1px solid #4e9bce; outline-offset: -1px; }
.caption { flex: 1; text-align: center; white-space: nowrap; color: #333; }
.account { display: flex; align-items: center; gap: 4px; }
.account svg { width: 10px; height: 10px; }
.account .login { display: flex; align-items: center; gap: 2px; margin-right: 32px; }
.account .help { width: 9px; height: 9px; margin-left: 6px; border: 1px solid #444; border-radius: 50%; font-weight: 700; line-height: 7px; }
.winctl { display: flex; margin-left: 32px; }
.winctl svg { width: 8px; height: 8px; }

/* ribbon tabs */
.tabs { display: flex; gap: 1px; padding-top: 2px; height: 14px; background: #cdcdcd; color: #333; }
.tabs button { padding: 0 5px; height: 12px; line-height: 12px; }
.tabs .file { width: 25px; background: #2272a9; color: #fff; }
.tabs .on { background: #f2f2f2; }
.tabs .more { display: flex; align-items: center; gap: 3px; margin-left: 6px; }
.tabs .more i:first-child { width: 8px; height: 5px; border: 1px solid #555; border-radius: 1px; background: #eee; }

/* ribbon */
.ribbon { display: flex; height: 54px; background: #f0f0f0; border-bottom: 1px solid #d2d2d2; }
.panel { display: flex; flex-direction: column; flex: none; border-right: 1px solid #dcdcdc; }
.tools { display: grid; height: 42px; }
.panel h2 { display: flex; justify-content: center; align-items: center; gap: 4px; height: 10px; color: #333; }
.tool { position: relative; display: flex; flex-direction: column; align-items: center; width: 100%; height: 42px; padding-top: 2px; line-height: 10px; }
.tool svg { width: 20px; height: 20px; opacity: .85; }
.tool span { text-align: center; }
.tool.drop::after, .tool.dropside::after { content: ""; position: absolute; top: 34px; border: 2px solid transparent; border-top-color: #333; border-bottom: 0; }
.tool.dropside::after { right: 0; border-width: 1px; border-top-width: 2px; }
.tool.off { color: #b5b5b5; }
.tool.picked { background: #b5d9f3; outline: 1px solid #7db4dc; outline-offset: -1px; }
.tool.open { background: linear-gradient(#e4f1fa 21px, #6aa9d2 21px, #6aa9d2 22px, #b5d9f3 22px); outline: 1px solid #7db4dc; outline-offset: -1px; }
.p-select { padding: 0 2px 0 3px; }
.p-select .tools { grid-template-columns: 22px; }
.p-select h2 { justify-content: flex-start; }
.p-build .tools { grid-template-columns: 24px 19px 24px 24px 23px 25px 24px 26px 22px 22px 20px; }
.p-stairs { padding-left: 5px; border-right: 0; }
.p-stairs .tools { grid-template-columns: 34px 25px 21px; }
.p-model { padding: 0 2px; }
.p-model .tools { grid-template-columns: 22px 22px 22px; }
.p-room { padding: 0 1px; }
.p-room .tools { grid-template-columns: 21px 24px 25px 24px 23px 23px; }
.p-open { padding: 0 2px 0 1px; border-right: 0; }
.p-open .tools { grid-template-columns: 22px 21px 22px 21px 24px; }
.p-datum { padding: 0 2px; }
.p-datum .tools { grid-template-columns: 21px 21px; }
.p-plane { padding: 0 1px; border-right: 0; }
.p-plane .tools { grid-template-columns: 24px 24px 21px 23px; }

.split { position: relative; }
.menu { position: absolute; z-index: 5; top: 42px; left: 0; width: 63px; padding-bottom: 1px; border: 1px solid #8b8b8b; background: #fff; color: #333; }
.menu button { display: flex; align-items: center; gap: 1px; width: 100%; height: 22px; padding-left: 1px; }
.menu button svg { width: 20px; height: 20px; opacity: .85; }
.menu .hover { height: 23px; margin-top: 3px; background: #c3e2f6; outline: 1px solid #66aad8; outline-offset: -1px; }
.menu .pointer { position: absolute; right: 7px; bottom: 4px; width: 14px; height: 14px; }

.brand { margin-left: auto; padding-right: 12px; color: #111; }
.mark { display: flex; align-items: center; gap: 7px; height: 40px; padding: 0 2px; border-bottom: 2px solid #3f92c4; }
.mark svg { width: 30px; height: 36px; }
.mark strong { color: #2389c3; font-size: 31px; line-height: 36px; }
.brand p { font-weight: 700; line-height: 13px; white-space: nowrap; }
.options { height: 15px; background: #f0f0f0; border-bottom: 1px solid #c4c4c4; }

/* work area */
.work { display: grid; grid-template-columns: 124px 1fr 133px; flex: 1; min-height: 0; }
.head { display: flex; align-items: center; justify-content: space-between; height: 12px; padding: 0 2px; background: #f4f4f4; }
.head svg { width: 7px; height: 7px; }

.props { display: flex; flex-direction: column; min-height: 0; border-right: 1px solid #c4c4c4; background: #f0f0f0; }
.type { display: flex; align-items: center; gap: 3px; height: 41px; padding: 0 3px 0 2px; border-bottom: 1px solid #d0d0d0; }
.thumb { display: grid; place-items: center; width: 36px; height: 36px; background: #f7f7f7; outline: 1px solid #e2e2e2; }
.thumb svg { width: 18px; height: 18px; }
.type .caret { margin-left: auto; }
.instance { display: flex; justify-content: space-between; height: 15px; padding: 1px 5px 1px 0; }
.instance > button { display: flex; align-items: center; gap: 3px; color: #111; }
.instance > button svg { width: 10px; height: 10px; }
.pick { position: relative; display: flex; align-items: center; }
.pick select { width: 100%; height: 100%; appearance: none; padding-left: 2px; outline: 1px solid #c2c2c2; outline-offset: -1px; }
.pick svg { position: absolute; right: 2px; width: 6px; height: 6px; color: #888; pointer-events: none; }
.instance .pick { width: 75px; background: #e4e4e4; }

.sheet { display: flex; flex: 1; min-height: 0; background: #fff; }
.sheet table { flex: 1; height: 100%; table-layout: fixed; border-collapse: collapse; margin-right: 1px; }
.c-name { width: 53px; }
.c-end { width: 7px; }
.sheet th, .sheet td { height: 11px; padding: 0; border-bottom: 1px dashed #cfcfcf; line-height: 9px; text-align: left; font-weight: 400; white-space: nowrap; overflow: hidden; }
.sheet th { padding-left: 6px; }
.sheet td { padding-left: 1px; border-left: 1px dashed #cfcfcf; }
.sheet .ro { color: #9a9a9a; }
.sheet .cat th { background: #e0e0e0; padding-left: 1px; border-bottom-color: #e0e0e0; position: relative; }
.sheet .cat svg { position: absolute; right: 2px; top: 3px; width: 5px; height: 5px; }
.sheet td button { display: block; width: 100%; height: 10px; line-height: 8px; background: #e2e2e2; border: 1px solid #b4b4b4; }
.sheet input[type="text"] { display: block; width: 100%; height: 10px; padding-left: 3px; border: 1px solid #333; background: #fff; }
.sheet input[type="checkbox"] { display: block; appearance: none; width: 8px; height: 8px; border: 1px solid #666; background: #fff; }
.sheet input[type="checkbox"]:disabled { border-color: #ddd; }
.vbar { display: flex; flex-direction: column; align-items: center; justify-content: space-between; width: 10px; padding: 3px 0 1px; background: #f0f0f0; }
.vbar svg { width: 6px; height: 6px; color: #444; }
.sheet .vbar i { flex: 1; width: 8px; margin: 2px 0 32px; background: #c9c9c9; }
.foot { display: flex; align-items: center; justify-content: space-between; height: 14px; padding: 1px 2px; }
.foot a { color: #1778b8; }
.foot button { width: 41px; height: 11px; background: #d0d0d0; color: #999; }

.view { display: flex; flex-direction: column; min-width: 0; min-height: 0; }
.doctabs { display: flex; align-items: center; justify-content: space-between; height: 12px; padding-right: 3px; background: #c9c9c9; }
.doctab { display: flex; align-items: center; gap: 4px; width: 70px; height: 12px; padding: 0 1px 0 3px; background: #fff; }
.doctab > svg { width: 9px; height: 9px; }
.doctab button { margin-left: auto; }
.doctab button svg { width: 6px; height: 6px; }
.stage { display: flex; flex: 1; min-height: 0; }
.canvas { position: relative; flex: 1; min-width: 0; background: #fff; }
.model { position: absolute; inset: 0; width: 100%; height: 100%; }
.faces { font-size: 12px; fill: #b4b4b4; }
.navbar { position: absolute; top: 97px; right: 1px; display: flex; flex-direction: column; align-items: center; gap: 4px; width: 20px; padding: 3px 0; background: rgba(255, 255, 255, .7); border: 1px solid #b5b5b5; border-radius: 3px; }
.navbar svg { width: 13px; height: 13px; }
.navbar .dot { align-self: flex-end; width: 4px; height: 4px; margin-right: 2px; border: 1px solid #999; }
.navbar .caret { border-top-color: #888; }
.vbar.wide { background: #f1f1f1; }
.vbar.wide i { width: 8px; height: 10px; background: #c6c6c6; }
.viewctl { display: flex; align-items: center; height: 12px; padding-left: 13px; background: #f3f3f3; }
.viewctl button { width: 12px; display: flex; justify-content: center; }
.viewctl svg { width: 10px; height: 10px; opacity: .85; }
.viewctl .ratio { width: 31px; justify-content: flex-start; }
.viewctl .tiny svg { width: 6px; height: 6px; }
.hbar { display: flex; justify-content: center; flex: 1; padding-right: 14px; }
.hbar i { width: 9px; height: 9px; background: #c6c6c6; }

.browser { border-left: 2px solid #d2d2d2; background: #fff; }
.tree { display: grid; grid-template-rows: repeat(16, 1fr); height: 180px; list-style: none; }
.tree li { display: flex; align-items: center; gap: 3px; padding-left: 2px; white-space: nowrap; }
.tree li.l2 { padding-left: 13px; gap: 5px; }
.tree li.l3 { padding-left: 26px; gap: 4px; }
.tree svg { width: 9px; height: 9px; }
.tree .cur { background: #dedede; }
.exp { position: relative; flex: none; width: 5px; height: 5px; border: 1px solid #bbb; background: linear-gradient(#777, #777) center / 3px 1px no-repeat, linear-gradient(#777, #777) center / 1px 3px no-repeat; }
.exp.minus { background: linear-gradient(#777, #777) center / 3px 1px no-repeat; }
.exp.none { background: none; border: 0; border-bottom: 1px dotted #aaa; height: 1px; }
.stub { width: 5px; border-top: 1px dotted #aaa; }
.leaf { width: 9px; height: 9px; border: 1px dotted #666; }

/* status bar */
.status { display: grid; grid-template-columns: 530px 1fr auto; align-items: center; height: 13px; background: #cdcdcd; white-space: nowrap; }
.status svg { width: 10px; height: 10px; }
.sets { display: flex; align-items: center; gap: 4px; }
.sets .pick { width: 114px; height: 11px; background: #fff; color: #888; }
.sets .pick svg { width: 6px; height: 6px; }
.sets .faint { opacity: .5; }
.sets .apart { margin-left: 8px; }
.selects { display: flex; gap: 4px; padding-right: 40px; }
.selects button { display: flex; align-items: center; }
```
